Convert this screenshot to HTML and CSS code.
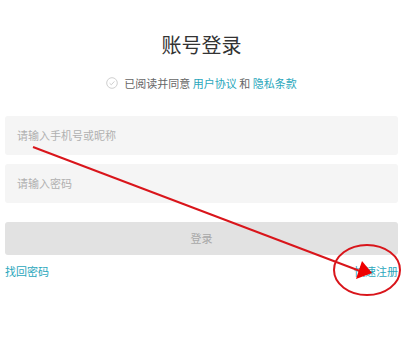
FILE: index.html
```html
<!DOCTYPE html>
<html lang="zh">
<head>
<meta charset="utf-8">
<link rel="stylesheet" href="styles.css">
</head>
<body>
<div class="page">
  <h1 class="title">账号登录</h1>
  <div class="agree">
    <svg class="check" width="12" height="12" viewBox="0 0 12 12"><circle cx="6" cy="6" r="5.3" fill="none" stroke="#cfcfcf" stroke-width="1"/><path d="M3.6 6.2 L5.3 7.8 L8.4 4.4" fill="none" stroke="#cfcfcf" stroke-width="1"/></svg>
    <span>已阅读并同意 <a class="link">用户协议</a> 和 <a class="link">隐私条款</a></span>
  </div>
  <div class="form">
    <div class="field">请输入手机号或昵称</div>
    <div class="field">请输入密码</div>
    <div class="btn">登录</div>
    <div class="links">
      <a class="link">找回密码</a>
      <a class="link">快速注册</a>
    </div>
  </div>
  <svg class="annot" width="403" height="339" viewBox="0 0 403 339">
    <line x1="33" y1="147" x2="360" y2="271" stroke="#d9151b" stroke-width="2"/>
    <polygon points="356,279 362,261 372,273" fill="#ee0000"/>
    <ellipse cx="367" cy="270" rx="33" ry="25" fill="none" stroke="#d9151b" stroke-width="2"/>
  </svg>
</div>
</body>
</html>
```
FILE: styles.css
```css
html, body {
  margin: 0;
  padding: 0;
  background: #fff;
}
body {
  font-family: "Noto Sans CJK SC", "Noto Sans", sans-serif;
  width: 403px;
  height: 339px;
  overflow: hidden;
}
.page {
  position: relative;
  padding: 0 5px;
}
.title {
  margin: 0;
  padding-top: 31px;
  height: 28px;
  line-height: 28px;
  font-size: 20px;
  font-weight: normal;
  color: #333;
  text-align: center;
}
.agree {
  margin-top: 17px;
  height: 14px;
  display: flex;
  align-items: center;
  justify-content: center;
  gap: 6px;
  font-size: 11px;
  line-height: 14px;
  color: #666;
}
.check {
  display: block;
}
.link {
  color: #2aa7bc;
  text-decoration: none;
}
.form {
  margin-top: 26px;
  display: flex;
  flex-direction: column;
}
.field {
  height: 39px;
  line-height: 39px;
  background: #f5f5f5;
  border-radius: 3px;
  padding-left: 12px;
  font-size: 11px;
  color: #b0b0b0;
  margin-bottom: 9px;
}
.btn {
  margin-top: 10px;
  height: 33px;
  line-height: 33px;
  background: #e2e2e2;
  border-radius: 3px;
  text-align: center;
  font-size: 11px;
  color: #a8a8a8;
}
.links {
  margin-top: 8px;
  display: flex;
  justify-content: space-between;
  font-size: 11px;
  line-height: 16px;
}
.annot {
  position: absolute;
  left: 0;
  top: 0;
  pointer-events: none;
}
```
